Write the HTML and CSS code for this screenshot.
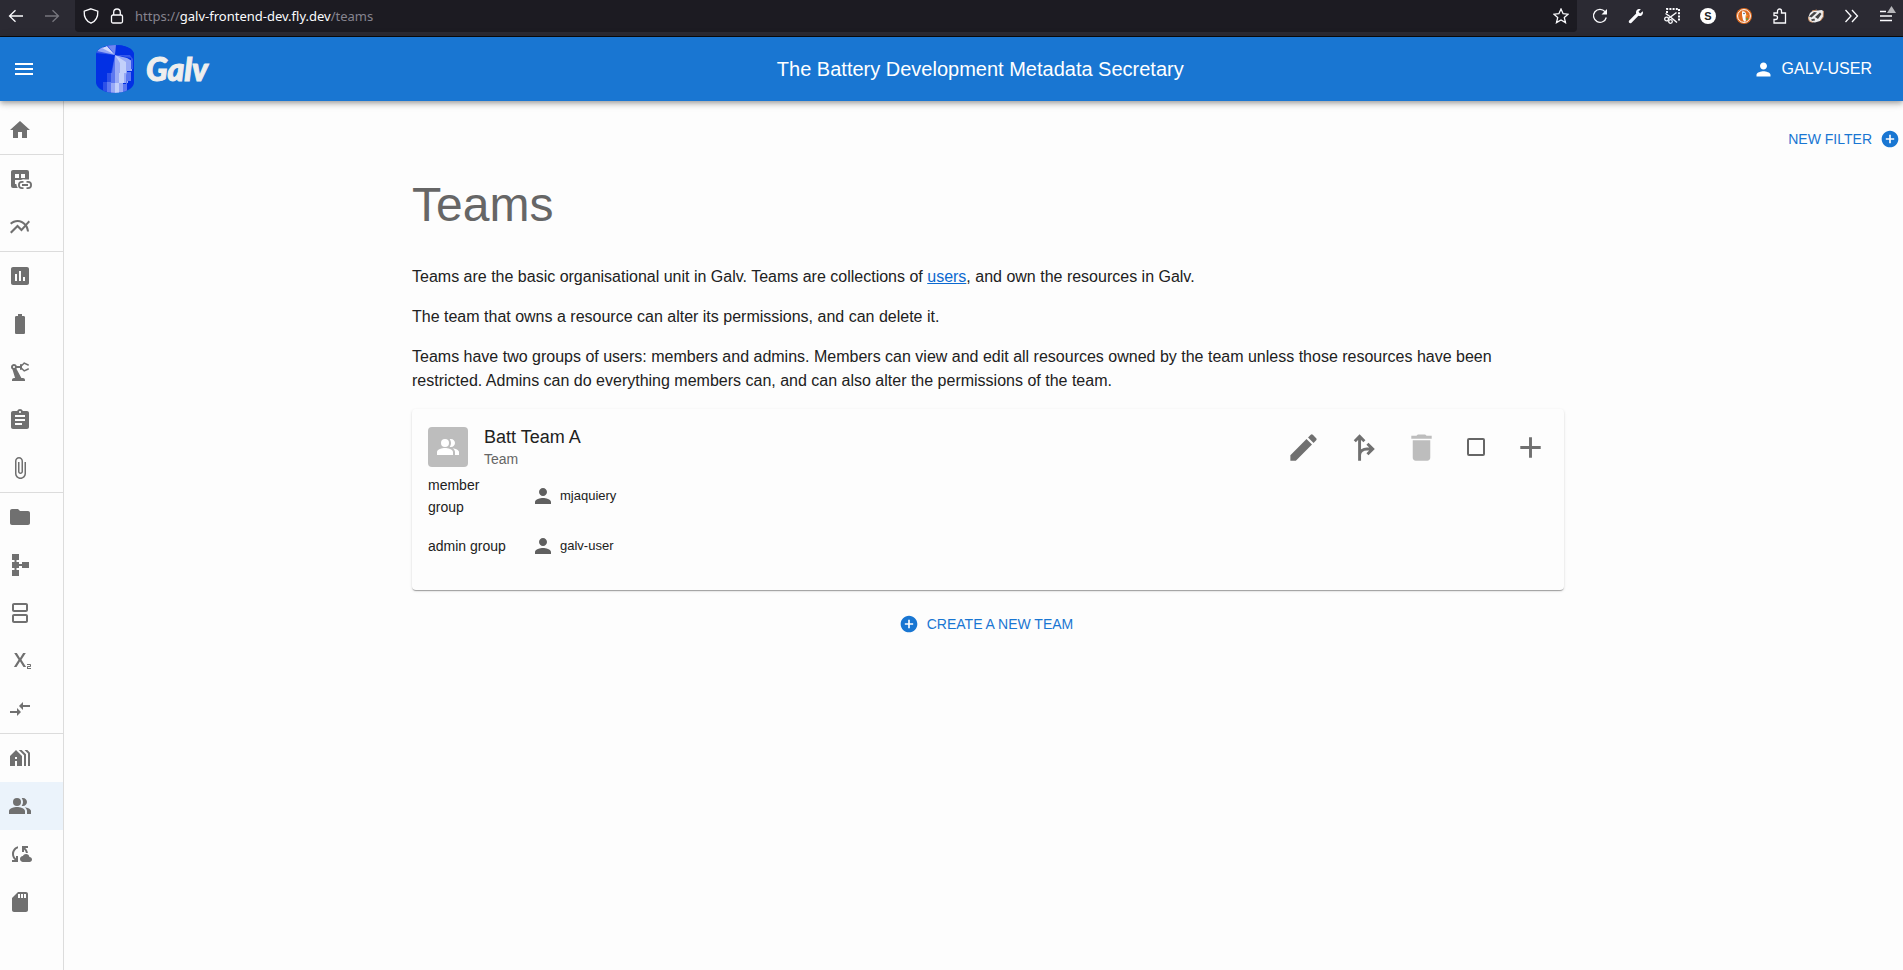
FILE: index.html
```html
<!DOCTYPE html>
<html lang="en">
<head>
<meta charset="utf-8">
<title>Galv - Teams</title>
<link rel="stylesheet" href="styles.css">
</head>
<body>
<svg class="defs" aria-hidden="true">
  <symbol id="person" viewBox="0 0 24 24"><path d="M12 12c2.21 0 4-1.79 4-4s-1.79-4-4-4-4 1.79-4 4 1.79 4 4 4zm0 2c-2.67 0-8 1.34-8 4v2h16v-2c0-2.66-5.33-4-8-4z"/></symbol>
  <symbol id="people" viewBox="0 0 24 24"><path d="M16.67 13.13C18.04 14.06 19 15.32 19 17v3h4v-3c0-2.18-3.57-3.47-6.33-3.87z"/><circle cx="9" cy="8" r="4"/><path d="M15 12c2.21 0 4-1.79 4-4s-1.79-4-4-4c-.47 0-.91.1-1.33.24C14.5 5.27 15 6.58 15 8s-.5 2.73-1.33 3.76c.42.14.86.24 1.33.24zm-6 1c-2.67 0-8 1.34-8 4v3h16v-3c0-2.66-5.33-4-8-4z"/></symbol>
  <symbol id="add-circle" viewBox="0 0 24 24"><path d="M12 2C6.48 2 2 6.48 2 12s4.48 10 10 10 10-4.48 10-10S17.52 2 12 2zm5 11h-4v4h-2v-4H7v-2h4V7h2v4h4v2z"/></symbol>
</svg>

<div class="browser">
  <div class="browser-nav">
    <button class="tool" aria-label="Back"><svg class="line" viewBox="0 0 16 16"><path d="M15 8H1.5M7.5 2.200 1.500 8l6 5.800"/></svg></button>
    <button class="tool dim" aria-label="Forward"><svg class="line" viewBox="0 0 16 16"><path d="M1 8h13.500M8.500 2.200l6 5.800-6 5.800"/></svg></button>
  </div>
  <div class="urlbar">
    <svg class="line" viewBox="0 0 16 16"><path d="M8 .8l6.800 2.400c.3 5.500-1.800 9.800-6.800 12C3 13 .9 8.700 1.200 3.200z"/></svg>
    <svg class="line" viewBox="0 0 16 16"><rect x="2.500" y="7" width="11" height="8" rx="1.500"/><path d="M4.700 7V4.300a3.300 3.300 0 0 1 6.600 0V7"/></svg>
    <span class="url">https://<b>galv-frontend-dev.fly.dev</b>/teams</span>
    <button class="star" aria-label="Bookmark"><svg class="line" viewBox="0 0 16 16"><path d="M8 1l2.100 4.700 5 .5-3.800 3.400 1.200 5L8 12l-4.500 2.600 1.200-5L.9 6.200l5-.5z"/></svg></button>
  </div>
  <div class="browser-tools">
    <button class="tool" aria-label="Reload"><svg class="line" viewBox="0 0 16 16"><path d="M14.300 9.500A6.500 6.500 0 1 1 13 3.600"/><path class="solid" d="M15 1v5.500H9.500z"/></svg></button>
    <button class="tool" aria-label="Developer tools"><svg viewBox="0 0 16 16"><path d="M14.700 3.200l-2.500 2.300-1.700-1.700L12.800 1.300C10 .2 7.300 2.600 8.200 5.600L1 12.700c-.9 1.500.8 3.200 2.300 2.300l7.100-7.200c3 .9 5.500-1.700 4.300-4.600z"/></svg></button>
    <button class="tool" aria-label="Screenshot"><svg class="line" viewBox="0 0 16 16"><path stroke-dasharray="2 1.200" stroke-width="2" d="M3 5V1h12v11.500"/><path stroke-width="1.500" d="M4.500 10.500 12.500 4.500M1.500 5.500 6 8.500M7 9.500l6 5"/><circle cx="2.600" cy="11" r="1.900"/><circle cx="6.500" cy="13.500" r="1.800"/></svg></button>
    <button class="tool" aria-label="S extension"><span class="badge">S</span></button>
    <button class="tool" aria-label="Privacy"><svg viewBox="0 0 16 16"><circle cx="8" cy="8" r="8" fill="#de6b20"/><circle cx="8" cy="8" r="6.400" fill="none" stroke="#fff"/><path d="M6 3.500c2-1 4 .3 4.200 3L9.500 9l.5 3.500-1.500 1.200L7 12 6 7z"/><circle cx="8" cy="5.500" r=".7" fill="#234"/><path fill="#f5b82e" d="M9.500 7l2.500.5-2 1.200z"/><path fill="#49a447" d="M9 11l3-1v2z"/></svg></button>
    <button class="tool" aria-label="Extensions"><svg class="line" viewBox="0 0 16 16"><path d="M5.500 5V3a2 2 0 0 1 4 0v2h4v10H2v-3.500h1.600a1.900 1.900 0 0 0 0-3.800H2V5z"/></svg></button>
    <button class="tool" aria-label="Badger"><svg viewBox="0 0 16 16"><path fill="#eee" d="M0 10 2 5l3-2.500 5 0L13.500 2l2 1-.5 6-3 4-5 1.500-5-.5z"/><path fill="#444" d="M1 8.500 6 4l3 .5L3.500 9.500zM7 9l5-4.500 1.500 1.500-3.500 5zM3 11.500l3.500-1 .5 2-3 .5z"/><path fill="none" stroke="#d38b55" stroke-width=".8" d="M4 3l5-1M.8 9v3.500l4 2M15.300 3v6l-3 4"/></svg></button>
    <button class="tool" aria-label="More tools"><svg class="line" viewBox="0 0 16 16"><path d="M1.500 2 7 8l-5.500 6M8 2l5.500 6L8 14"/></svg></button>
    <button class="tool app-menu" aria-label="Application menu"><svg class="line" viewBox="0 0 20 16"><path d="M3 3.500h6M3 8h12M3 12.500h12"/><path fill="#b4b4b8" stroke="none" d="M14.500-2 19 5h-9z"/></svg></button>
  </div>
</div>

<header class="appbar">
  <button class="menu" aria-label="Open menu"><svg viewBox="0 0 24 24"><path d="M3 18h18v-2H3v2zm0-5h18v-2H3v2zm0-7v2h18V6H3z"/></svg></button>
  <a class="brand" href="#">
    <svg class="logo" viewBox="0 0 38 48">
      <clipPath id="can"><path d="M0 9C2-3 36-3 38 9v29C36 51 2 51 0 38z"/></clipPath>
      <g clip-path="url(#can)">
        <path fill="#0230e4" d="M0 0h38v48H0z"/>
        <path fill="#3457ea" d="M19 10 0 8V5l4-2z"/>
        <path fill="#93a6f5" d="M19 10 1 6l5-4z"/>
        <path fill="#d2dafc" d="M19 10 6 3l5-2z"/>
        <path fill="#6e86f0" d="M19 10 11 0h9z"/>
        <path fill="#0230e4" d="M19 10 22 0h16v9z"/>
        <path fill="#2c50e8" d="M15 28 19 10v18zM11 28h8v10h-8zM7 37h11v11H7z"/>
        <path fill="#5c78f0" d="M19 10l-3 18h6V14zM15 28h7v10h-7zM11 37h8v11h-8z"/>
        <path fill="#98aaf6" d="M19 10l0 18h6V16zM19 28h6v10h-6zM15 38h7v10h-7z"/>
        <path fill="#98aaf6" d="M19 10l12 3 5 3v10h-5v5h-6V17zM25 28h7v10h-5v10h-5V38h3z"/>
        <path fill="#c3d0fa" d="M19 10l5 8v10h6V17zM23 28h5v10h-5zM19 38h4v10h-4z"/>
        <path fill="#5c78f0" d="M31 27h4v9h-4v3h-4v9h4v-9h-1V30z"/>
        <path fill="#3457ea" d="M19 10h15l3 4v10h-2V13z"/>
      </g>
    </svg>
    <span class="wordmark">Galv</span>
  </a>
  <div class="tagline">The Battery Development Metadata Secretary</div>
  <button class="account"><svg viewBox="0 0 24 24"><use href="#person"/></svg>GALV-USER</button>
</header>

<div class="shell">
  <nav class="drawer">
    <a href="#" aria-label="Home"><svg viewBox="0 0 24 24"><path d="M10 20v-6h4v6h5v-8h3L12 3 2 12h3v8z"/></svg></a>
    <hr>
    <a href="#" aria-label="Dataset mapping"><svg viewBox="0 0 24 24"><path fill-rule="evenodd" d="M5 3h14a2 2 0 0 1 2 2v7.500H17a5 5 0 0 0-4 .5v0H7v4h1.300c.1 1.500.6 2.800 1.500 3.900H5a2 2 0 0 1-2-2V5c0-1.100.9-2 2-2zm2 4v4h4V7zm6 0v4h4V7z"/><path d="M15 20.200h-1a2.200 2.200 0 0 1 0-4.400h1.500V14H14a4 4 0 0 0 0 8h1.500v-1.800zM20 14h-1.500v1.800H20a2.200 2.200 0 0 1 0 4.400h-1.500V22H20a4 4 0 0 0 0-8zm-6 3h6v2h-6z"/></svg></a>
    <a href="#" aria-label="Charts"><svg viewBox="0 0 24 24"><path d="m22 6.920-1.410-1.410-2.850 3.210C15.680 6.400 12.830 5 9.610 5 6.720 5 4.070 6.160 2 8l1.420 1.420C5.120 7.930 7.270 7 9.610 7c2.740 0 5.090 1.260 6.770 3.240l-2.880 3.240-4-4L2 16.990l1.500 1.500 6-6.010 4 4 4.050-4.550c.75 1.350 1.250 2.900 1.440 4.550H21c-.22-2.300-.95-4.390-2.040-6.140L22 6.920z"/></svg></a>
    <hr>
    <a href="#" aria-label="Experiments"><svg viewBox="0 0 24 24"><path d="M19 3H5c-1.100 0-2 .9-2 2v14c0 1.100.9 2 2 2h14c1.100 0 2-.9 2-2V5c0-1.100-.9-2-2-2zM9 17H7v-7h2v7zm4 0h-2V7h2v10zm4 0h-2v-4h2v4z"/></svg></a>
    <a href="#" aria-label="Cells"><svg viewBox="0 0 24 24"><path d="M15.670 4H14V2h-4v2H8.330C7.600 4 7 4.600 7 5.330v15.330C7 21.400 7.600 22 8.330 22h7.330c.74 0 1.340-.6 1.340-1.330V5.330C17 4.600 16.400 4 15.670 4z"/></svg></a>
    <a href="#" aria-label="Equipment"><svg viewBox="0 0 24 24"><path d="m19.930 8.350-3.600 1.680L14 7.700V6.300l2.330-2.330 3.600 1.680c.38.18.82.01 1-.36.18-.38.01-.82-.36-1l-3.920-1.830c-.38-.18-.83-.1-1.130.2L13.780 4.400c-.18-.24-.46-.4-.78-.4-.55 0-1 .45-1 1v1H8.820C8.400 4.840 7.300 4 6 4 4.340 4 3 5.340 3 7c0 1.100.6 2.050 1.480 2.580L7.080 18H6c-1.100 0-2 .9-2 2v1h13v-1c0-1.100-.9-2-2-2h-1.620L8.410 8.770c.17-.24.31-.49.41-.77H12v1c0 .55.450 1 1 1 .32 0 .6-.16.78-.4l1.740 1.740c.3.3.75.38 1.130.2l3.920-1.830c.38-.18.54-.62.36-1-.18-.37-.62-.54-1-.36zM6 8c-.55 0-1-.45-1-1s.45-1 1-1 1 .45 1 1-.45 1-1 1z"/></svg></a>
    <a href="#" aria-label="Schedules"><svg viewBox="0 0 24 24"><path d="M19 3h-4.180C14.400 1.840 13.300 1 12 1c-1.300 0-2.400.84-2.820 2H5c-1.100 0-2 .9-2 2v14c0 1.100.9 2 2 2h14c1.100 0 2-.9 2-2V5c0-1.100-.9-2-2-2zm-7 0c.55 0 1 .45 1 1s-.45 1-1 1-1-.45-1-1 .45-1 1-1zm2 14H7v-2h7v2zm3-4H7v-2h10v2zm0-4H7V7h10v2z"/></svg></a>
    <a href="#" aria-label="Attachments"><svg viewBox="0 0 24 24"><path d="M16.500 6v11.500c0 2.210-1.790 4-4 4s-4-1.790-4-4V5c0-1.380 1.120-2.500 2.500-2.500s2.500 1.120 2.500 2.500v10.500c0 .55-.45 1-1 1s-1-.45-1-1V6H10v9.500c0 1.380 1.120 2.500 2.500 2.500s2.500-1.120 2.500-2.500V5c0-2.210-1.790-4-4-4S7 2.790 7 5v12.500c0 3.040 2.460 5.500 5.500 5.500s5.500-2.460 5.500-5.500V6h-1.500z"/></svg></a>
    <hr>
    <a href="#" aria-label="Files"><svg viewBox="0 0 24 24"><path d="M10 4H4c-1.100 0-1.990.9-1.990 2L2 18c0 1.100.9 2 2 2h16c1.100 0 2-.9 2-2V8c0-1.100-.9-2-2-2h-8l-2-2z"/></svg></a>
    <a href="#" aria-label="Schemas"><svg viewBox="0 0 24 24"><path d="M14 9v2h-3V9H8.500V7H11V1H4v6h2.500v2H4v6h2.500v2H4v6h7v-6H8.500v-2H11v-2h3v2h7V9h-7z"/></svg></a>
    <a href="#" aria-label="Columns"><svg viewBox="0 0 24 24"><path d="M18 4v5H6V4h12m0-2H6c-1.100 0-2 .9-2 2v5c0 1.100.9 2 2 2h12c1.100 0 2-.9 2-2V4c0-1.100-.9-2-2-2zm0 13v5H6v-5h12m0-2H6c-1.100 0-2 .9-2 2v5c0 1.100.9 2 2 2h12c1.100 0 2-.9 2-2v-5c0-1.100-.9-2-2-2z"/></svg></a>
    <a href="#" aria-label="Units"><svg viewBox="0 0 24 24"><path d="M22 18h-2v1h3v1h-4v-2c0-.55.45-1 1-1h2v-1h-3v-1h3c.55 0 1 .45 1 1v1c0 .55-.45 1-1 1zM5.880 18h2.660l3.400-5.420h.12l3.400 5.420h2.660l-4.650-7.270L17.810 4h-2.680l-3.070 4.990h-.12L8.850 4H6.190l4.320 6.730L5.880 18z"/></svg></a>
    <a href="#" aria-label="Mappings"><svg viewBox="0 0 24 24"><path d="M9.010 14H2v2h7.010v3L13 15l-3.990-4v3zm5.980-1v-3H22V8h-7.010V5L11 9l3.990 4z"/></svg></a>
    <hr>
    <a href="#" aria-label="Labs"><svg viewBox="0 0 24 24"><path d="M18 20V8.350L13.650 4h-2.830L16 9.180V20h2zm4 0V6.690L19.310 4h-2.830L20 7.520V20h2zM8 4l-6 6v10h5v-5h2v5h5V10L8 4zm1 9H7v-2h2v2z"/></svg></a>
    <a class="selected" href="#" aria-label="Teams" aria-current="page"><svg viewBox="0 0 24 24"><use href="#people"/></svg></a>
    <a href="#" aria-label="Harvesters"><svg viewBox="0 0 24 24"><path d="M21.500 14.980c-.02 0-.03 0-.05.01C21.200 13.300 19.760 12 18 12c-1.400 0-2.600.83-3.160 2.020C13.260 14.100 12 15.400 12 17c0 1.660 1.340 3 3 3l6.500-.02c1.380 0 2.500-1.120 2.500-2.500s-1.120-2.500-2.500-2.500zM10 4.260v2.090C7.670 7.180 6 9.390 6 12c0 1.770.78 3.340 2 4.440V14h2v6H4v-2h2.730C5.060 16.540 4 14.400 4 12c0-3.730 2.550-6.850 6-7.740zM20 6h-2.730c1.430 1.260 2.410 3.010 2.660 5h-2.020c-.23-1.360-.93-2.550-1.910-3.440V10h-2V4h6v2z"/></svg></a>
    <a href="#" aria-label="Storage"><svg viewBox="0 0 24 24"><path d="M18 2h-8L4.020 8 4 20c0 1.100.9 2 2 2h12c1.100 0 2-.9 2-2V4c0-1.100-.9-2-2-2zm-6 6h-2V4h2v4zm3 0h-2V4h2v4zm3 0h-2V4h2v4z"/></svg></a>
  </nav>

  <main class="main">
    <div class="filters">
      <button class="text-button">NEW FILTER<svg viewBox="0 0 24 24"><use href="#add-circle"/></svg></button>
    </div>
    <div class="container">
      <h1>Teams</h1>
      <p>Teams are the basic organisational unit in Galv. Teams are collections of <a href="#">users</a>, and own the resources in Galv.</p>
      <p>The team that owns a resource can alter its permissions, and can delete it.</p>
      <p>Teams have two groups of users: members and admins. Members can view and edit all resources owned by the team unless those resources have been restricted. Admins can do everything members can, and can also alter the permissions of the team.</p>

      <article class="card">
        <div class="card-header">
          <div class="avatar"><svg viewBox="0 0 24 24"><use href="#people"/></svg></div>
          <div class="card-title">
            <h2>Batt Team A</h2>
            <span>Team</span>
          </div>
          <div class="actions">
            <button aria-label="Edit"><svg viewBox="0 0 24 24"><path d="M3 17.250V21h3.750L17.810 9.940l-3.750-3.750L3 17.250zM20.710 7.040c.39-.39.39-1.020 0-1.410l-2.340-2.340a1 1 0 0 0-1.410 0l-1.830 1.830 3.750 3.750 1.830-1.830z"/></svg></button>
            <button aria-label="Fork"><svg viewBox="0 0 24 24"><path fill="none" stroke="currentColor" stroke-width="2" d="M10 21V4.500M6.700 7.700 10 4.400l3.300 3.300M10 17c.3-2.600 2.500-4 5-4h3.500M15.400 9.400 19 13l-3.600 3.600"/></svg></button>
            <button aria-label="Delete" disabled><svg viewBox="0 0 24 24"><path d="M6 19c0 1.100.9 2 2 2h8c1.100 0 2-.9 2-2V7H6v12zM19 4h-3.500l-1-1h-5l-1 1H5v2h14V4z"/></svg></button>
            <label class="check"><input type="checkbox" aria-label="Select Batt Team A"></label>
            <button aria-label="Expand"><svg viewBox="0 0 24 24"><path d="M19 13h-6v6h-2v-6H5v-2h6V5h2v6h6z"/></svg></button>
          </div>
        </div>
        <dl class="groups">
          <dt>member group</dt>
          <dd><svg viewBox="0 0 24 24"><use href="#person"/></svg>mjaquiery</dd>
          <dt>admin group</dt>
          <dd><svg viewBox="0 0 24 24"><use href="#person"/></svg>galv-user</dd>
        </dl>
      </article>

      <div class="create">
        <button class="text-button"><svg viewBox="0 0 24 24"><use href="#add-circle"/></svg>CREATE A NEW TEAM</button>
      </div>
    </div>
  </main>
</div>
</body>
</html>
```
FILE: styles.css
```css
* { box-sizing: border-box; }

body {
  margin: 0;
  min-height: 100vh;
  display: flex;
  flex-direction: column;
  background: #fdfdfd;
  color: #212121;
  font: 16px/24px "Liberation Sans", Arial, sans-serif;
}

svg { display: block; flex: none; fill: currentColor; }
.defs { display: none; }
button {
  margin: 0;
  padding: 0;
  border: 0;
  background: none;
  color: inherit;
  font: inherit;
  cursor: pointer;
}
a { color: inherit; text-decoration: none; }

/* Browser toolbar */
.browser {
  display: flex;
  height: 37px;
  background: #2b2a33;
  border-bottom: 1px solid #0c0c0d;
  color: #fbfbfe;
}
.browser svg { width: 16px; height: 16px; }
.line { fill: none; stroke: currentColor; stroke-width: 1.3; }
.line .solid { fill: currentColor; stroke: none; }
.browser-nav, .browser-tools { display: flex; height: 32px; }
.browser-nav { width: 75px; flex: none; padding-right: 3px; }
.browser-tools { padding-left: 5px; }
.tool { display: grid; place-items: center; width: 36px; flex: none; }
.browser-nav .tool:first-child { width: 32px; }
.browser-nav .tool:last-child { width: 40px; }
.dim { color: #77767e; }
.browser .app-menu { width: 33px; }
.browser .app-menu svg { width: 20px; overflow: visible; }
.badge {
  width: 16px;
  height: 16px;
  border-radius: 50%;
  background: #fff;
  color: #222;
  font: bold 11px/16px "Liberation Sans", Arial, sans-serif;
}
.urlbar {
  flex: 1;
  display: flex;
  align-items: center;
  height: 32px;
  gap: 10px;
  padding: 0 8px;
  border-radius: 0 0 4px 4px;
  background: #1c1b22;
}
.url { flex: 1; font: 13px/20px "Noto Sans", sans-serif; color: #86848f; }
.url b { font-weight: 400; color: #fbfbfe; }

/* Application bar */
.appbar {
  position: relative;
  display: flex;
  align-items: center;
  height: 64px;
  padding: 0 31px 0 12px;
  background: #1976d2;
  color: #fff;
  box-shadow: 0 2px 4px -1px rgba(0,0,0,.2), 0 4px 5px rgba(0,0,0,.14), 0 1px 10px rgba(0,0,0,.12);
}
.menu svg { width: 24px; height: 24px; }
.brand { display: flex; align-items: center; gap: 12px; margin-left: 60px; }
.logo { width: 38px; height: 48px; }
.wordmark {
  font: italic 900 32px/36px Lato, sans-serif;
  color: #eee;
  -webkit-text-stroke: 1px #eee;
}
.tagline { flex: 1; text-align: center; font-size: 20px; line-height: 32px; }
.account { display: flex; align-items: center; gap: 8px; }
.account svg { width: 21px; height: 21px; }

/* Navigation drawer */
.shell { flex: 1; display: flex; }
.drawer {
  flex: none;
  width: 64px;
  padding-top: 5px;
  border-right: 1px solid #dcdcdc;
  color: #707070;
}
.drawer a { display: flex; align-items: center; height: 48px; padding-left: 8px; }
.drawer svg { width: 24px; height: 24px; }
.drawer hr { margin: 0; border: 0; border-top: 1px solid #dcdcdc; }
.drawer .selected { background: #ebf3fb; }

/* Page content */
.main { flex: 1; min-width: 0; padding: 20px 0 20px 9px; }
.filters { display: flex; justify-content: flex-end; }
.text-button {
  display: flex;
  align-items: center;
  gap: 8px;
  height: 36px;
  padding: 0 8px 0 4px;
  color: #1976d2;
  font-size: 14px;
}
.filters .text-button { padding: 0 3px 0 8px; }
.text-button svg { width: 20px; height: 20px; }
.container { max-width: 1200px; margin: 20px auto 0; padding: 0 24px; }
h1 { margin: 0 0 32px; font-size: 48px; line-height: 56px; font-weight: 400; color: #666; }
p { margin: 0 0 16px; }
p a { color: #0b69d0; text-decoration: underline; }

.card {
  padding: 16px 8px 22px 16px;
  border-radius: 4px;
  box-shadow: 0 2px 1px -1px rgba(0,0,0,.2), 0 1px 1px rgba(0,0,0,.14), 0 1px 3px rgba(0,0,0,.12);
}
.card-header { display: flex; align-items: center; gap: 16px; height: 44px; }
.avatar {
  display: grid;
  place-items: center;
  width: 40px;
  height: 40px;
  border-radius: 4px;
  background: #bdbdbd;
  color: #fff;
}
.avatar svg { width: 24px; height: 24px; }
.card-title { flex: 1; }
.card-title h2 { margin: 0; font-size: 18px; line-height: 24px; font-weight: 400; }
.card-title span { display: block; font-size: 14px; line-height: 20px; color: #666; }
.actions { display: flex; align-items: center; gap: 8px; color: #707070; }
.actions button { padding: 8px; }
.actions button:disabled { color: #bdbdbd; }
.actions svg { width: 35px; height: 35px; }
.check { display: grid; padding: 12px; }
.check input {
  appearance: none;
  width: 18px;
  height: 18px;
  margin: 0;
  border: 2px solid #666;
  border-radius: 2px;
}
.groups {
  display: grid;
  grid-template-columns: 84px 1fr;
  grid-auto-rows: 44px;
  align-items: center;
  gap: 6px 19px;
  margin: 5px 0 0;
  font-size: 14px;
  line-height: 22px;
}
.groups dd { display: flex; align-items: center; gap: 5px; margin: 0; font-size: 13px; }
.groups svg { width: 24px; height: 24px; color: #606060; }
.create { display: flex; justify-content: center; margin-top: 16px; }
```
